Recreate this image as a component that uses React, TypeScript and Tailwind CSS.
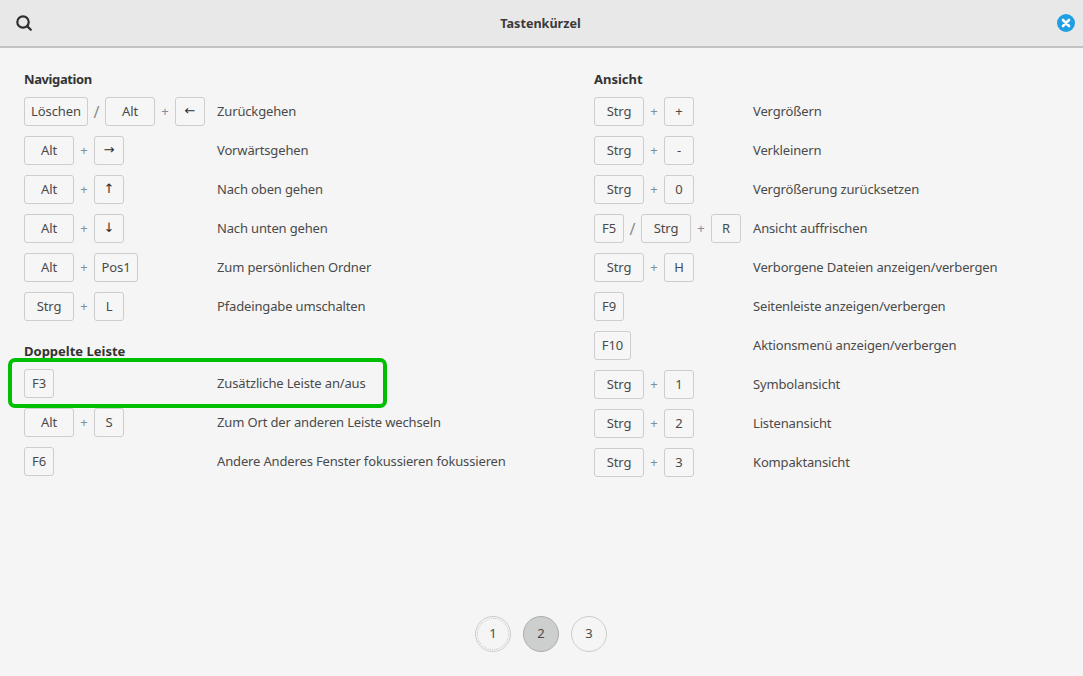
import React from "react";

type Row = { keys: string[]; label: string };

const navigation: Row[] = [
  { keys: ["Löschen", "/", "Alt", "+", "←"], label: "Zurückgehen" },
  { keys: ["Alt", "+", "→"], label: "Vorwärtsgehen" },
  { keys: ["Alt", "+", "↑"], label: "Nach oben gehen" },
  { keys: ["Alt", "+", "↓"], label: "Nach unten gehen" },
  { keys: ["Alt", "+", "Pos1"], label: "Zum persönlichen Ordner" },
  { keys: ["Strg", "+", "L"], label: "Pfadeingabe umschalten" },
];
const dual: Row[] = [
  { keys: ["F3"], label: "Zusätzliche Leiste an/aus" },
  { keys: ["Alt", "+", "S"], label: "Zum Ort der anderen Leiste wechseln" },
  { keys: ["F6"], label: "Andere Anderes Fenster fokussieren fokussieren" },
];
const view: Row[] = [
  { keys: ["Strg", "+", "+"], label: "Vergrößern" },
  { keys: ["Strg", "+", "-"], label: "Verkleinern" },
  { keys: ["Strg", "+", "0"], label: "Vergrößerung zurücksetzen" },
  { keys: ["F5", "/", "Strg", "+", "R"], label: "Ansicht auffrischen" },
  { keys: ["Strg", "+", "H"], label: "Verborgene Dateien anzeigen/verbergen" },
  { keys: ["F9"], label: "Seitenleiste anzeigen/verbergen" },
  { keys: ["F10"], label: "Aktionsmenü anzeigen/verbergen" },
  { keys: ["Strg", "+", "1"], label: "Symbolansicht" },
  { keys: ["Strg", "+", "2"], label: "Listenansicht" },
  { keys: ["Strg", "+", "3"], label: "Kompaktansicht" },
];

const arrows = ["←", "→", "↑", "↓"];

function keyWidth(k: string) {
  if (k === "Löschen") return "w-[64px]";
  if (k === "Alt" || k === "Strg") return "w-[50px]";
  if (k === "Pos1") return "w-[44px]";
  if (k === "F10") return "w-[37px]";
  return "w-[30px]";
}

function Keys({ keys }: { keys: string[] }) {
  return (
    <>
      {keys.map((k, i) => {
        if (i % 2 === 1) {
          return k === "/" ? (
            <span key={i} className="w-[17px] text-center text-[16px] text-[#8c8c8c]">/</span>
          ) : (
            <span key={i} className="w-[20px] text-center text-[#7f8f9c]">+</span>
          );
        }
        return (
          <span
            key={i}
            className={`${keyWidth(k)} h-[29px] flex items-center justify-center rounded-[3px] border border-[#cdcdcd] bg-[#f6f6f6] text-[#4a4a4a] tracking-[-0.1px]`}
          >
            {arrows.includes(k) ? (
              <span className="font-['DejaVu_Sans'] text-[13px] leading-none mb-[3px] text-[#2e2e2e]">{k}</span>
            ) : (
              k
            )}
          </span>
        );
      })}
    </>
  );
}

function ShortcutRow({ row, keyCol }: { row: Row; keyCol: string }) {
  return (
    <div className="flex h-[29px] mb-[10px] items-center">
      <div className={`${keyCol} flex items-center shrink-0`}>
        <Keys keys={row.keys} />
      </div>
      <span className="text-[#4a4a4a] whitespace-nowrap tracking-[-0.15px]">{row.label}</span>
    </div>
  );
}

function Heading({ children, className = "" }: { children: string; className?: string }) {
  return (
    <div className={`h-[20px] leading-[20px] font-bold text-[#333333] ${className}`}>{children}</div>
  );
}

export default function App() {
  return (
    <div
      className="relative w-[1083px] h-[676px] overflow-hidden bg-[#f5f5f5] text-[13px]"
      style={{ fontFamily: '"Noto Sans", sans-serif' }}
    >
      <header className="h-[48px] border-b-2 border-[#c2c2c2] bg-[#e8e8e8] flex items-center justify-between pl-[15px] pr-[8px]">
        <svg width="18" height="18" viewBox="0 0 18 18" fill="none" stroke="#2e2e2e" strokeWidth="2.2" strokeLinecap="round">
          <circle cx="8" cy="8" r="5.7" />
          <path d="M12.4 12.4 15.8 15.8" />
        </svg>
        <div className="font-bold text-[12.6px] text-[#3a3a3a] mr-[9px] mt-[2px]">Tastenkürzel</div>
        <svg width="18" height="18" viewBox="0 0 18 18">
          <circle cx="9" cy="9" r="9" fill="#1f9fe3" />
          <path d="M6 6 12 12M12 6 6 12" stroke="#ffffff" strokeWidth="2.6" strokeLinecap="round" />
        </svg>
      </header>

      <main className="flex pl-[24px] pt-[21px]">
        <section className="w-[570px] shrink-0">
          <Heading className="mb-[8px] tracking-[-0.4px]">Navigation</Heading>
          {navigation.map((r) => (
            <ShortcutRow key={r.label} row={r} keyCol="w-[193px]" />
          ))}
          <Heading className="mt-[20px] mb-[8px]">Doppelte Leiste</Heading>
          {dual.map((r) => (
            <ShortcutRow key={r.label} row={r} keyCol="w-[193px]" />
          ))}
        </section>
        <section>
          <Heading className="mb-[8px]">Ansicht</Heading>
          {view.map((r) => (
            <ShortcutRow key={r.label} row={r} keyCol="w-[159px]" />
          ))}
        </section>
      </main>

      <div className="absolute left-[8px] top-[358px] w-[379px] h-[50px] rounded-[7px] border-[4px] border-[#00bf00]" />

      <nav className="absolute left-[475px] top-[616px] flex gap-[12px] text-[#4a4a4a]">
        <span className="w-[36px] h-[36px] rounded-full border border-[#cccccc] flex items-center justify-center outline-1 outline-dotted outline-[#c4c4c4] outline-offset-[-3px]">1</span>
        <span className="w-[36px] h-[36px] rounded-full border border-[#acacac] bg-[#cdcfce] flex items-center justify-center">2</span>
        <span className="w-[36px] h-[36px] rounded-full border border-[#cccccc] flex items-center justify-center">3</span>
      </nav>
    </div>
  );
}
